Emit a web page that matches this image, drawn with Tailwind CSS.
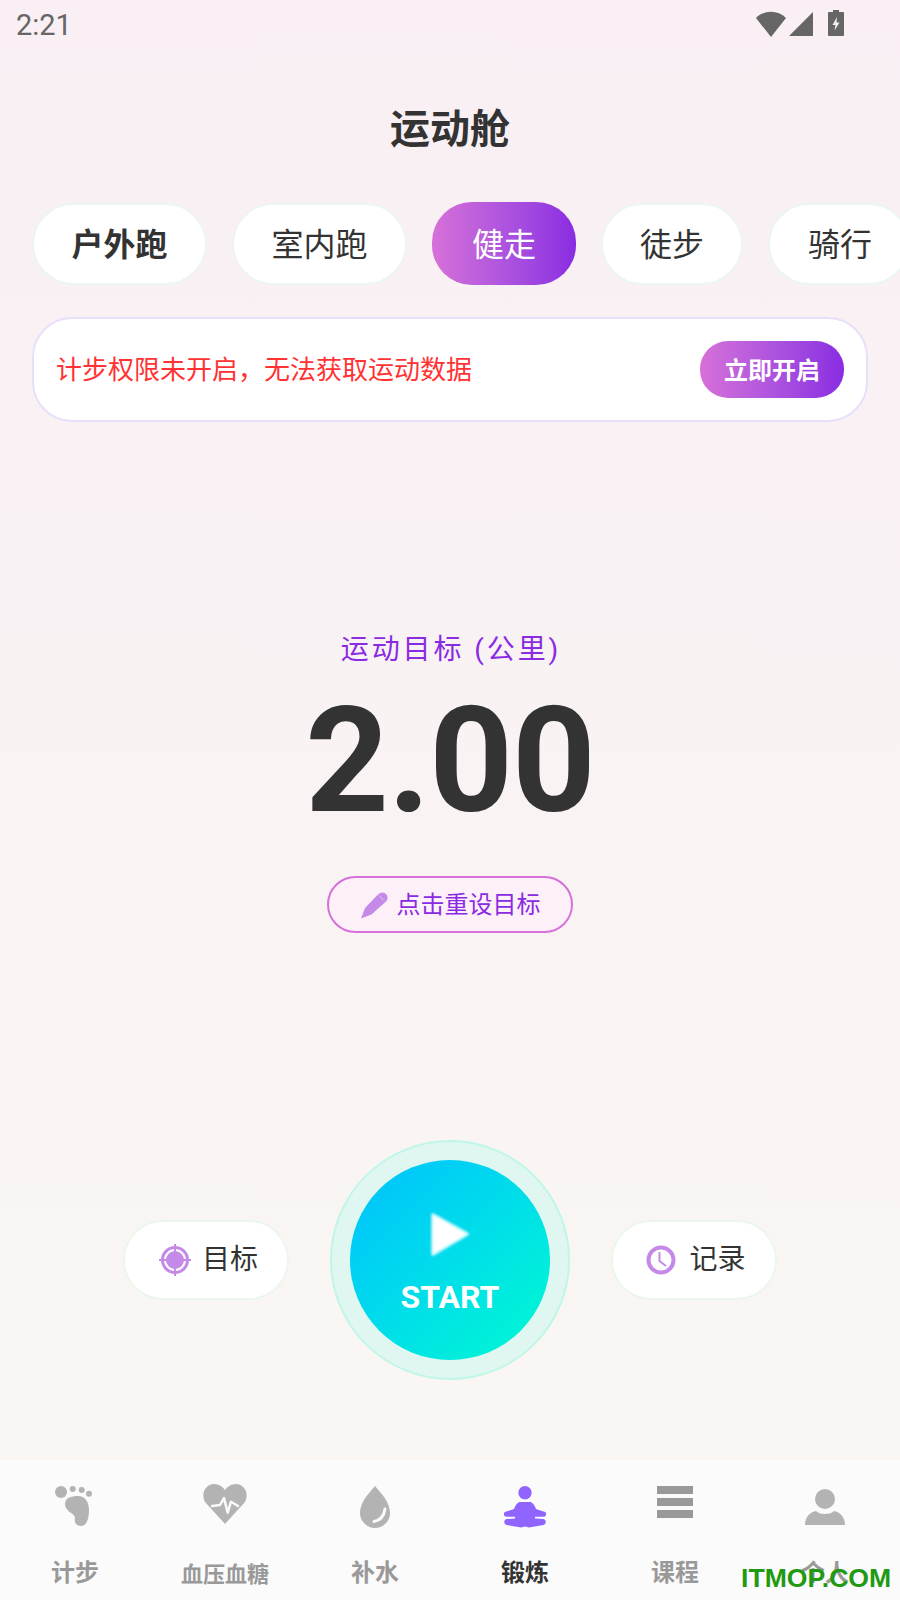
<!DOCTYPE html>
<html lang="zh">
<head>
<meta charset="utf-8">
<script src="https://cdn.jsdelivr.net/npm/@tailwindcss/browser@4"></script>
</head>
<body class="m-0">
<div class="relative w-[900px] h-[1600px] overflow-hidden flex flex-col bg-gradient-to-b from-[#f9eff4] to-[#f9f7f3] font-['Roboto','Noto_Sans_CJK_SC',sans-serif] text-[#333]">
  <!-- status bar -->
  <div class="h-[50px] shrink-0 flex items-center pl-[16px] pr-[56px] text-[#666]">
    <span class="text-[29px] leading-[50px]">2:21</span>
    <div class="ml-auto flex items-start h-[50px] pt-[10px]">
      <svg width="30" height="26" viewBox="0 0 30 26" class="mt-[1px]"><path d="M0 7 C8 -1.500 22 -1.500 30 7 L15 26Z" fill="#666"/></svg>
      <svg width="25" height="24" viewBox="0 0 25 24" class="ml-[3px] mt-[2px]"><path d="M24 0 V24 H0Z" fill="#666"/></svg>
      <svg width="16" height="26" viewBox="0 0 16 26" class="ml-[14px]"><path d="M5 0 H11 V2 H15 A1 1 0 0 1 16 3 V25 A1 1 0 0 1 15 26 H1 A1 1 0 0 1 0 25 V3 A1 1 0 0 1 1 2 H5Z" fill="#666"/><path d="M9 7 L4.500 15 H7.500 L6.500 20.500 L11.500 12.500 H8.500Z" fill="#f9eff4"/></svg>
    </div>
  </div>
  <!-- title -->
  <h1 class="mt-[40px] h-[80px] leading-[80px] text-center text-[40px] font-bold shrink-0">运动舱</h1>
  <!-- chips -->
  <div class="mt-[32px] h-[83px] shrink-0 flex items-center gap-[25px] pl-[32px] text-[32px]">
    <div class="w-[175px] h-[82px] shrink-0 rounded-[41px] bg-white border-2 border-[#ebf6ee] flex items-center justify-center pt-[2px] font-bold">户外跑</div>
    <div class="w-[175px] h-[82px] shrink-0 rounded-[41px] bg-white border-2 border-[#ebf6ee] flex items-center justify-center pt-[2px]">室内跑</div>
    <div class="w-[144px] h-[83px] shrink-0 rounded-[40px] bg-gradient-to-r from-[#d770d8] to-[#8a2be2] text-white flex items-center justify-center pt-[2px]">健走</div>
    <div class="w-[142px] h-[82px] shrink-0 rounded-[41px] bg-white border-2 border-[#ebf6ee] flex items-center justify-center pt-[2px]">徒步</div>
    <div class="w-[142px] h-[82px] shrink-0 rounded-[41px] bg-white border-2 border-[#ebf6ee] flex items-center justify-center pt-[2px] pl-[2px]">骑行</div>
  </div>
  <!-- notice -->
  <div class="mt-[32px] mx-[32px] h-[105px] shrink-0 rounded-[40px] bg-white border-2 border-[#e8dff9] flex items-center pl-[22px] pr-[22px]">
    <span class="text-[26px] text-[#ff3333] pt-[2px]">计步权限未开启，无法获取运动数据</span>
    <div class="ml-auto w-[144px] h-[57px] rounded-[28px] bg-gradient-to-r from-[#d770d8] to-[#8a2be2] text-white text-[24px] font-bold flex items-center justify-center pt-[2px]">立即开启</div>
  </div>
  <!-- goal -->
  <div class="mt-[208px] h-[40px] leading-[40px] shrink-0 text-center text-[28px] tracking-[2.900px] pl-[2px] text-[#8a2be2]">运动目标 (公里)</div>
  <div class="mt-[7px] h-[170px] leading-[170px] shrink-0 text-center text-[146px] font-bold tracking-[-1px]">2.00</div>
  <div class="mt-[29px] shrink-0 self-center w-[246px] h-[57px] rounded-[29px] border-2 border-[#d770d8] bg-[#fdf0f8] flex items-center justify-center gap-[9px] text-[24px] text-[#8a2be2]">
    <svg width="28" height="28" viewBox="0 0 28 28"><path d="M1 27.500 L5 17 L18.500 3 A4 4 0 0 1 26 10.500 L11.500 23.500Z" fill="#c58ae8"/><path d="M19 4.500 L24 9.500" stroke="#e4c8f3" stroke-width="1" fill="none"/></svg>
    <span>点击重设目标</span>
  </div>
  <!-- actions -->
  <div class="mt-[207px] h-[240px] shrink-0 flex items-center justify-center gap-[41px]">
    <div class="w-[166px] h-[80px] rounded-[40px] bg-white border-2 border-[#ebf6ee] flex items-center justify-center gap-[10px] pl-[4px] text-[28px]">
      <svg width="34" height="34" viewBox="0 0 34 34"><circle cx="17" cy="17" r="12.500" fill="none" stroke="#c58ae8" stroke-width="3"/><circle cx="17" cy="17" r="9" fill="#c58ae8"/><path d="M17 1 V33 M1 17 H33" stroke="#c58ae8" stroke-width="2"/></svg>
      <span>目标</span>
    </div>
    <div class="w-[240px] h-[240px] rounded-full bg-[#dff7f0] border-2 border-[#c0f6e8] flex items-center justify-center">
      <div class="w-[200px] h-[200px] rounded-full bg-gradient-to-br from-[#00bfff] to-[#00fad0] flex flex-col items-center text-white">
        <svg width="44" height="48" viewBox="0 0 44 48" class="mt-[50px] blur-[1px]"><path d="M5 5 L39 24 L5 44Z" fill="#fff" stroke="#fff" stroke-opacity="0.700" stroke-width="4" stroke-linejoin="round"/></svg>
        <span class="mt-[20px] text-[32px] leading-[38px] font-bold">START</span>
      </div>
    </div>
    <div class="w-[166px] h-[80px] rounded-[40px] bg-white border-2 border-[#ebf6ee] flex items-center justify-center gap-[13px] pl-[4px] text-[28px]">
      <svg width="30" height="30" viewBox="0 0 30 30"><circle cx="15" cy="15" r="12.500" fill="none" stroke="#c58ae8" stroke-width="4"/><path d="M13.500 7 V16 L20 21" fill="none" stroke="#c58ae8" stroke-width="2"/></svg>
      <span>记录</span>
    </div>
  </div>
  <!-- tab bar -->
  <nav class="mt-auto h-[140px] shrink-0 bg-[#fbfbfb] grid grid-cols-6 text-[24px] font-bold text-[#999]">
    <div class="flex flex-col items-center pt-[22px]">
      <svg width="48" height="48" viewBox="0 0 48 48" fill="#b3b3b3"><circle cx="10" cy="10" r="6"/><circle cx="21.700" cy="7" r="3"/><circle cx="30.700" cy="8" r="3"/><circle cx="38" cy="11.700" r="3"/><path d="M14 22 C14 16 20 14 27 14 C34 14 38 20 38 28 C38 36 36 44 30 44 C25 44 23 40 24 36 C24 31 14 30 14 22Z"/></svg>
      <span class="mt-[27px] leading-[32px]">计步</span>
    </div>
    <div class="flex flex-col items-center pt-[22px]">
      <svg width="48" height="48" viewBox="0 0 48 48"><path d="M24 42 L4 20 C-1 10 6 2 13 2 C18 2 22 5 24 8 C26 5 30 2 35 2 C42 2 49 10 44 20Z" fill="#b3b3b3"/><path d="M11 24 L19 23 L23 16 L26.700 30.700 L30 19.700 L37 24" fill="none" stroke="#fbfbfb" stroke-width="2.500" stroke-linecap="round" stroke-linejoin="round"/></svg>
      <span class="mt-[29px] leading-[32px] text-[22px]">血压血糖</span>
    </div>
    <div class="flex flex-col items-center pt-[22px]">
      <svg width="48" height="48" viewBox="0 0 48 48"><path d="M24 4 C30 11 39 20 39 31 A15 15 0 0 1 9 31 C9 20 18 11 24 4Z" fill="#b3b3b3"/><path d="M23 39.500 C29 38.500 33 34 34 27" fill="none" stroke="#fbfbfb" stroke-width="3" stroke-linecap="round"/></svg>
      <span class="mt-[27px] leading-[32px]">补水</span>
    </div>
    <div class="flex flex-col items-center pt-[22px] text-[#333]">
      <svg width="48" height="48" viewBox="0 0 48 48" fill="#9065ff"><circle cx="24" cy="10.700" r="6.700"/><path d="M19 20 H29 C31 20 33 22 35 27 L42.500 29.500 A2.600 2.600 0 0 1 42.500 34.700 L34 34.700 L34 36.500 L42.500 37 C45.500 38 45.500 42 42.500 43 L28 45.500 L24 44.500 L20 45.500 L5.500 43 C2.500 42 2.500 38 5.500 37 L14 36.500 L14 34.700 L5.500 34.700 A2.600 2.600 0 0 1 5.500 29.500 L13 27 C15 22 17 20 19 20Z"/></svg>
      <span class="mt-[27px] leading-[32px]">锻炼</span>
    </div>
    <div class="flex flex-col items-center pt-[22px]">
      <svg width="48" height="48" viewBox="0 0 48 48" fill="#999"><rect x="6" y="4" width="36" height="8"/><rect x="6" y="16" width="36" height="8"/><rect x="6" y="28" width="36" height="8"/></svg>
      <span class="mt-[27px] leading-[32px]">课程</span>
    </div>
    <div class="flex flex-col items-center pt-[22px]">
      <svg width="48" height="48" viewBox="0 0 48 48" fill="#b3b3b3"><circle cx="24" cy="17" r="10"/><path d="M4 43 C4 34 10 30 15 29 C18 33 30 33 33 29 C38 30 44 34 44 43Z"/></svg>
      <span class="mt-[27px] leading-[32px]">个人</span>
    </div>
  </nav>
  <div class="absolute left-[741px] top-[1562px] text-[26.600px] leading-[32px] font-bold font-['Liberation_Sans',sans-serif] text-[#1f9a12]">ITMOP.COM</div>
</div>
</body>
</html>
